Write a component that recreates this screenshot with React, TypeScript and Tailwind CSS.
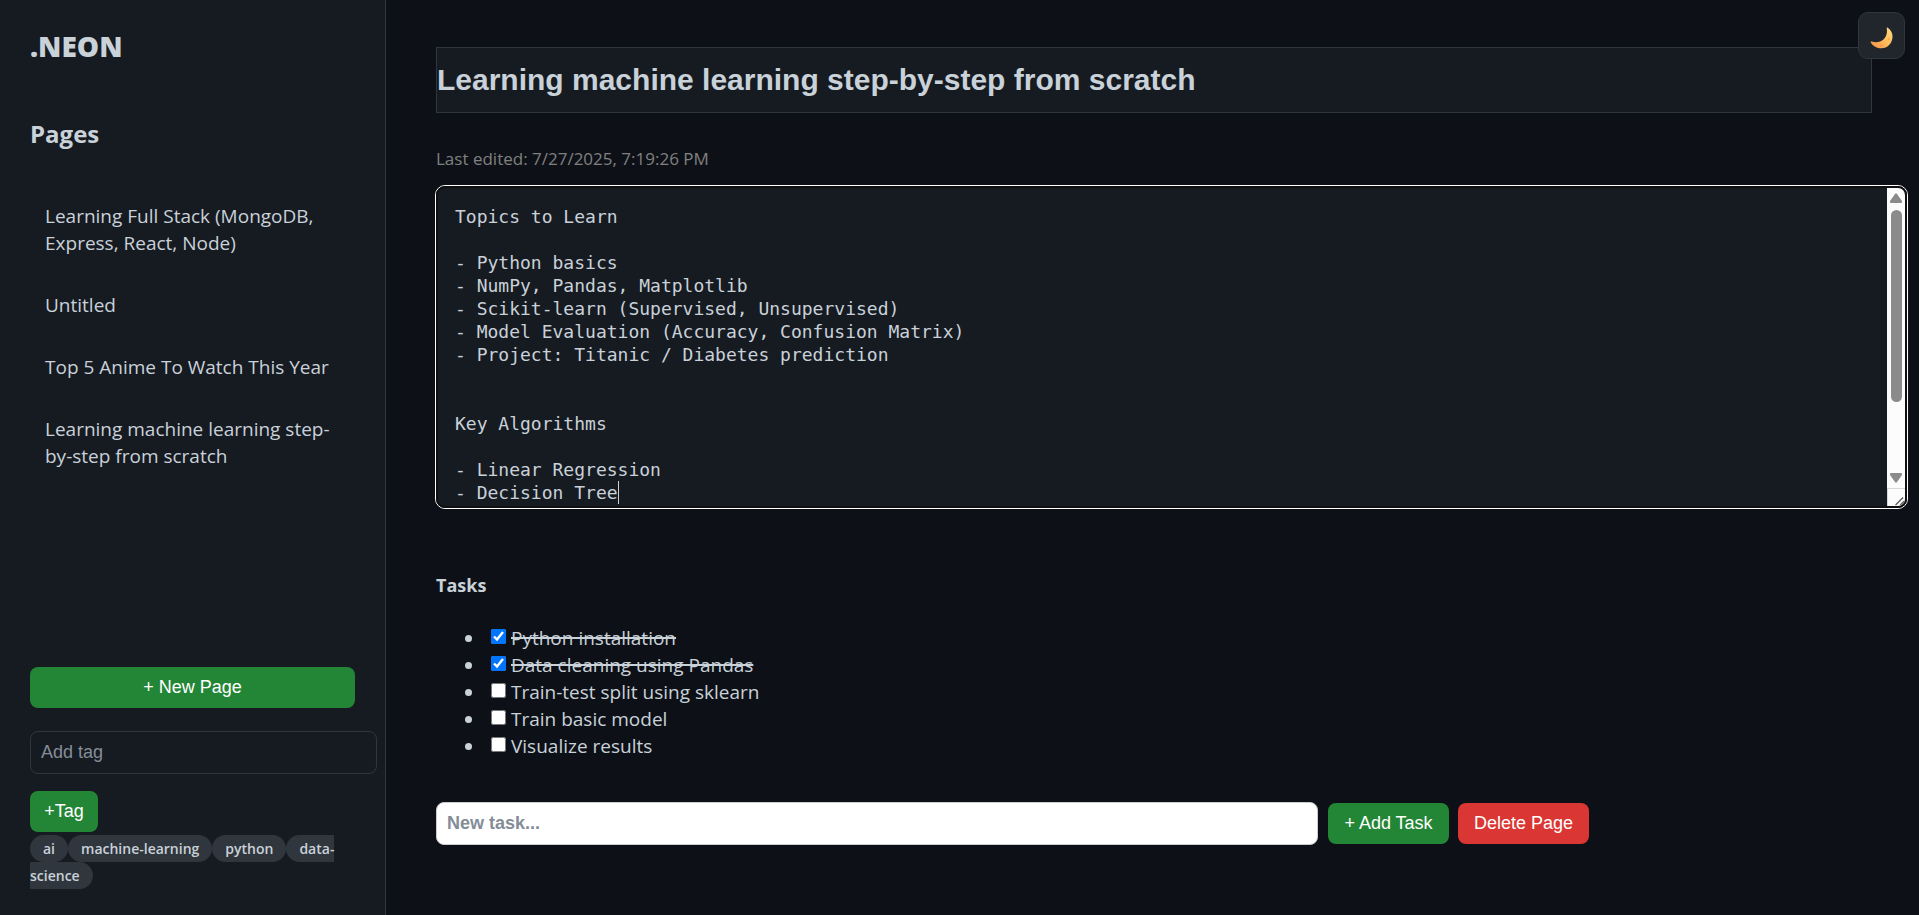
import { useState } from "react";

const PAGES = [
  "Learning Full Stack (MongoDB, Express, React, Node)",
  "Untitled",
  "Top 5 Anime To Watch This Year",
  "Learning machine learning step-by-step from scratch",
];

const TAGS = ["ai", "machine-learning", "python", "data-science"];

const NOTES = `Topics to Learn

- Python basics
- NumPy, Pandas, Matplotlib
- Scikit-learn (Supervised, Unsupervised)
- Model Evaluation (Accuracy, Confusion Matrix)
- Project: Titanic / Diabetes prediction


Key Algorithms

- Linear Regression
- Decision Tree`;

const INITIAL_TASKS = [
  { text: "Python installation", done: true },
  { text: "Data cleaning using Pandas", done: true },
  { text: "Train-test split using sklearn", done: false },
  { text: "Train basic model", done: false },
  { text: "Visualize results", done: false },
];

const button =
  "h-[41px] rounded-lg pb-[2px] font-['Liberation_Sans',sans-serif] text-lg leading-5 text-white";

function MoonIcon() {
  return (
    <svg viewBox="0 0 24 24" className="size-6" aria-hidden="true">
      <defs>
        <linearGradient id="moon" x1="0" y1="1" x2="1" y2="0">
          <stop offset="0" stopColor="#f59245" />
          <stop offset="0.5" stopColor="#ffbc5c" />
          <stop offset="1" stopColor="#ffd983" />
        </linearGradient>
      </defs>
      <path
        d="M17.500 1.500C21 4 22.700 7 22.500 11C22.200 17.500 17.500 22.200 11.500 22.300C7 22.300 3 20.200 0.700 16.400C0.500 15.800 1 15.400 1.700 15.600C6 16.800 10.500 16.300 13.800 13.200C16.800 10.300 17.500 6.500 16.700 2.100C16.700 1.500 17.100 1.200 17.500 1.500Z"
        fill="url(#moon)"
      />
      <circle cx="19" cy="13" r="1.200" fill="#f0a040" opacity="0.6" />
      <circle cx="11.500" cy="19.500" r="1.300" fill="#f09040" opacity="0.6" />
    </svg>
  );
}

function Sidebar() {
  return (
    <aside className="flex w-[386px] shrink-0 flex-col border-r border-[#30363d] bg-[#161b22] px-[30px] pt-[27px] pb-[26px]">
      <h1 className="text-[28px] leading-[38px] font-extrabold">.NEON</h1>
      <h2 className="mt-[51px] text-2xl leading-9 font-bold">Pages</h2>
      <ul className="mt-9 flex flex-col gap-[5px]">
        {PAGES.map((page) => (
          <li key={page}>
            <a href="#" className="block p-[15px]">
              {page}
            </a>
          </li>
        ))}
      </ul>
      <div className="mt-auto">
        <button type="button" className={`${button} w-full bg-[#238636]`}>
          + New Page
        </button>
        <input
          aria-label="Add tag"
          placeholder="Add tag"
          className="mt-[23px] -mr-[22px] block h-[43px] w-[calc(100%+22px)] rounded-lg border border-[#30363d] bg-transparent px-[10px] font-['Liberation_Sans',sans-serif] text-lg leading-5 placeholder:text-[#848d97]"
        />
        <button type="button" className={`${button} mt-[17px] block w-[68px] bg-[#238636]`}>
          +Tag
        </button>
        <div className="mt-[3px] text-sm leading-[27px] font-semibold">
          {TAGS.map((tag) => (
            <span key={tag} className="rounded-[14px] bg-[#30363d] px-[13px] py-1">
              {tag}
            </span>
          ))}
        </div>
      </div>
    </aside>
  );
}

function ScrollRail() {
  return (
    <div className="flex w-[18px] shrink-0 flex-col bg-[#fcfcfc]" aria-hidden="true">
      <svg viewBox="0 0 18 22" className="h-[22px] w-[18px] fill-[#8b8b8b]">
        <path d="M8 6Q9 4.600 10 6L15 13Q15.500 15 14 15H4Q2.500 15 3 13Z" />
      </svg>
      <div className="mx-auto h-[192px] w-[11px] rounded-full bg-[#8b8b8b]" />
      <svg viewBox="0 0 18 22" className="mt-auto h-[22px] w-[18px] fill-[#8b8b8b]">
        <path d="M8 16Q9 17.400 10 16L15 9Q15.500 7 14 7H4Q2.500 7 3 9Z" />
      </svg>
      <svg viewBox="0 0 18 18" className="size-[18px] border-t border-l border-[#d8d8d8]">
        <path d="M8 17L16 9M13 17L17 13" stroke="#555" strokeWidth="1.300" fill="none" />
      </svg>
    </div>
  );
}

function Editor() {
  return (
    <div className="-mr-[36px] -ml-px rounded-[10px] border border-white">
      <div className="relative flex overflow-hidden rounded-[9px] border-2 border-[#101010] bg-[#161b22] font-['DejaVu_Sans_Mono',monospace] text-lg leading-[23px]">
        <textarea
          aria-label="Page content"
          rows={13}
          defaultValue={NOTES}
          className="block min-w-0 flex-1 resize-none overflow-hidden bg-transparent pt-[17px] pr-4 pb-[2px] pl-[17px] outline-none"
        />
        <span className="absolute bottom-[2px] left-[calc(17px+15ch)] h-[23px] w-px bg-[#c9d1d9]" />
        <ScrollRail />
      </div>
    </div>
  );
}

function Tasks() {
  const [tasks, setTasks] = useState(INITIAL_TASKS);
  const toggle = (index: number) =>
    setTasks(tasks.map((t, i) => (i === index ? { ...t, done: !t.done } : t)));

  return (
    <section className="mt-[63px]">
      <h3 className="text-lg leading-[27px] font-bold">Tasks</h3>
      <ul className="mt-[26px] pl-[29px]">
        {tasks.map((task, i) => (
          <li
            key={task.text}
            className="flex h-[27px] items-center gap-[19px] before:size-[7px] before:rounded-full before:bg-[#c9d1d9]"
          >
            <label className="flex items-center gap-[5px]">
              <input
                type="checkbox"
                checked={task.done}
                onChange={() => toggle(i)}
                className="mb-1 size-[15px]"
              />
              <span className={task.done ? "line-through decoration-2" : ""}>{task.text}</span>
            </label>
          </li>
        ))}
      </ul>
    </section>
  );
}

export default function App() {
  return (
    <div className="flex min-h-screen bg-[#0d1117] font-['Open_Sans','Noto_Sans',sans-serif] text-[19px] leading-[27px] text-[#c9d1d9]">
      <Sidebar />
      <main className="min-w-0 flex-1 pt-[47px] pr-[47px] pl-[50px]">
        <input
          aria-label="Page title"
          defaultValue="Learning machine learning step-by-step from scratch"
          className="block h-[66px] w-full border border-[#30363d] bg-[#161b22] font-['Liberation_Sans',sans-serif] text-[30px] leading-9 font-bold"
        />
        <p className="mt-8 mb-[13px] text-[17px] text-[#808080]">
          Last edited: 7/27/2025, 7:19:26 PM
        </p>
        <Editor />
        <Tasks />
        <form className="mt-[42px] flex items-center" onSubmit={(e) => e.preventDefault()}>
          <input
            aria-label="New task"
            placeholder="New task..."
            className="h-[43px] w-[882px] min-w-0 rounded-lg border border-[#ccc] bg-white px-[10px] font-['Liberation_Sans',sans-serif] text-lg leading-5 font-bold text-[#0d1117] placeholder:text-[#848d97]"
          />
          <button type="submit" className={`${button} ml-[10px] w-[121px] shrink-0 bg-[#238636]`}>
            + Add Task
          </button>
          <button type="button" className={`${button} ml-[9px] w-[131px] shrink-0 bg-[#da3633]`}>
            Delete Page
          </button>
        </form>
      </main>
      <button
        type="button"
        aria-label="Toggle theme"
        className="absolute top-3 right-[14px] flex size-[47px] items-center justify-center rounded-[10px] border border-[#30363d] bg-[#21262d] pt-[5px]"
      >
        <MoonIcon />
      </button>
    </div>
  );
}
